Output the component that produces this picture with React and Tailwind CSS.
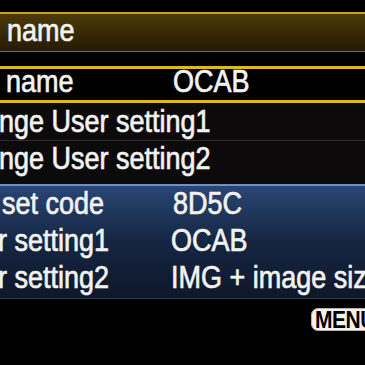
import React from "react";

function T({ children, className = "" }) {
  return (
    <span
      className={
        "inline-block origin-bottom scale-y-[1.14] whitespace-nowrap [-webkit-text-stroke:0.6px_#f2f2f0] " +
        className
      }
    >
      {children}
    </span>
  );
}

function Row({ left, right, leftPad = "pl-0" }) {
  return (
    <div className="flex items-center">
      <div className={"w-[173px] shrink-0 " + leftPad}>
        <T>{left}</T>
      </div>
      {right && <T>{right}</T>}
    </div>
  );
}

export default function App() {
  return (
    <div
      className="w-[365px] h-[365px] bg-black overflow-hidden text-[#f2f2f0] text-[27px] leading-none"
      style={{ fontFamily: '"Liberation Sans", Arial, sans-serif' }}
    >
      <div className="pt-[12px]">
        {/* title bar */}
        <div className="h-[40px] border-t-2 border-t-[#c7a818] border-b border-b-[#8a7016] bg-gradient-to-b from-[#4d3a09] to-[#251b04] flex items-center pl-[7px] pt-[2px]">
          <T>name</T>
        </div>
        {/* selected row */}
        <div className="mt-[14px] h-[37px] border-y-[3px] border-[#dcba1c] flex items-center pb-[1px]">
          <Row left="name" right="OCAB" leftPad="pl-[6px]" />
        </div>
        {/* plain rows */}
        <div className="bg-[#0d0a0c]">
          <div className="h-[38px] border-b border-[#2e2b2c] flex items-center pt-[5px]">
            <Row left="nge User setting1" leftPad="-ml-[1px]" />
          </div>
          <div className="h-[43px] flex items-center pb-[3px]">
            <Row left="nge User setting2" leftPad="-ml-[1px]" />
          </div>
        </div>
        {/* blue panel */}
        <div className="h-[115px] border-t-2 border-t-[#6f8fc0] border-b border-b-[#2a3b55] bg-gradient-to-b from-[#294674] via-[#152642] to-[#0e1829] flex flex-col pt-[2px]">
          <div className="h-[37px] flex items-center">
            <Row left="set code" right="8D5C" leftPad="pl-[2px]" />
          </div>
          <div className="h-[38px] flex items-center">
            <Row left="r setting1" right="OCAB" leftPad="-ml-[2px]" />
          </div>
          <div className="h-[36px] flex items-center">
            <Row left="r setting2" right="IMG + image siz" leftPad="-ml-[2px]" />
          </div>
        </div>
        {/* MENU */}
        <div className="mt-[9px] flex">
          <div className="ml-[311px] w-[62px] shrink-0 h-[23px] bg-[#f3f1ea] rounded-l-[7px] border border-[#b8b4a6] flex items-center pl-[3px]">
            <span className="inline-block origin-center scale-y-[1.1] text-black text-[21px] font-bold leading-none whitespace-nowrap tracking-[-0.5px]">
              MENU
            </span>
          </div>
        </div>
      </div>
    </div>
  );
}
